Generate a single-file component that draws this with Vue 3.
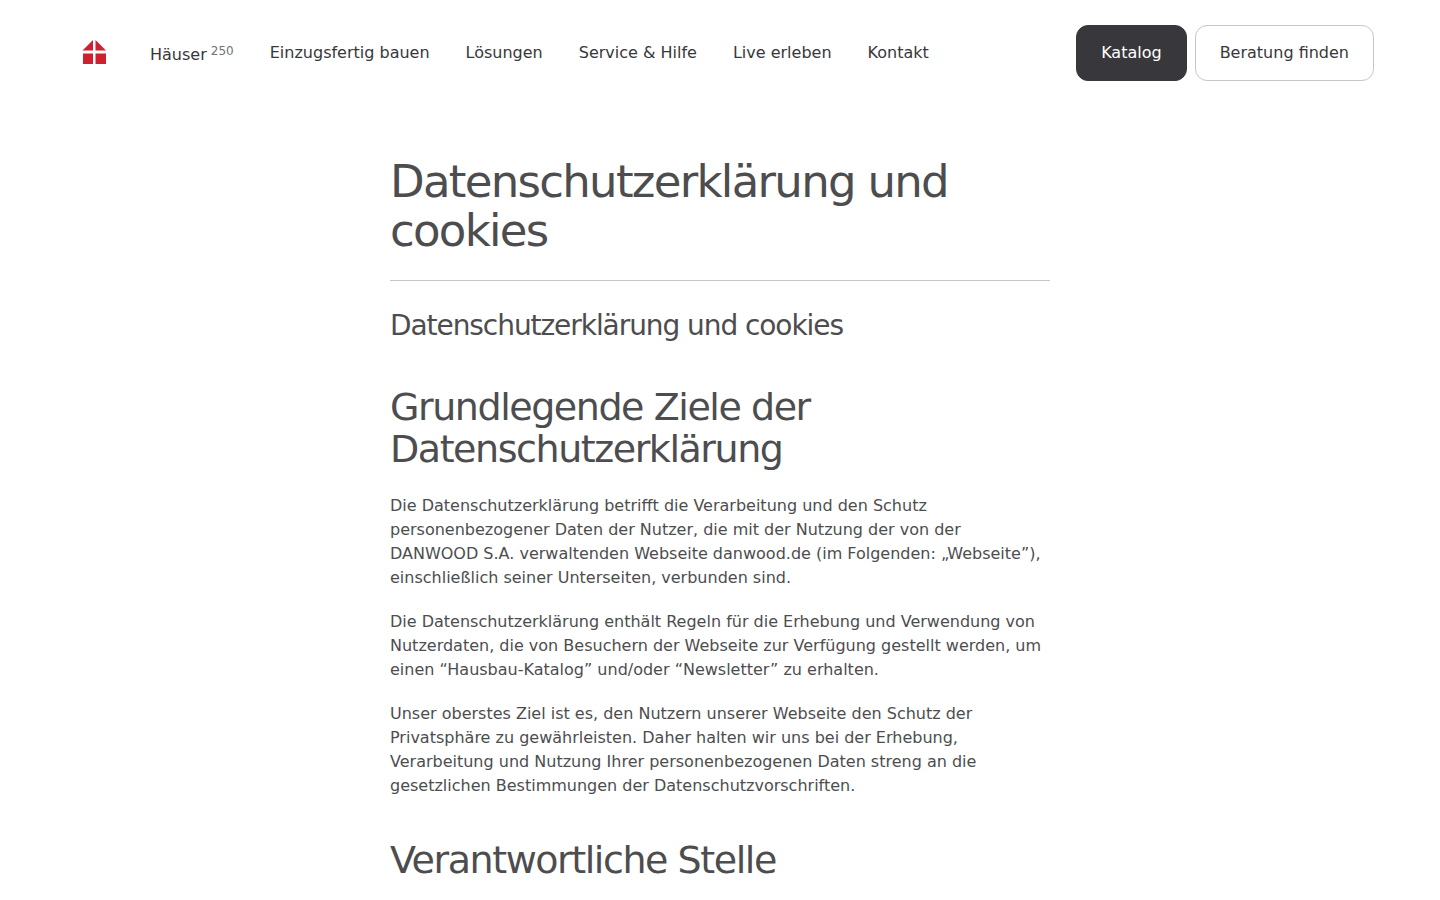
<script setup>
const nav = ['Einzugsfertig bauen', 'Lösungen', 'Service & Hilfe', 'Live erleben', 'Kontakt']
</script>

<template>
  <div class="page">
    <header class="header">
      <a href="#" class="logo" aria-label="Danwood">
        <svg width="24" height="26" viewBox="0 0 24 26" fill="#cf202f">
          <path d="M11 0v10.5H0.5z" />
          <path d="M13.5 0v10.5H24z" />
          <path d="M1 13.5h10V24H1z" />
          <path d="M13.5 13.5H24V24H13.5z" />
        </svg>
      </a>
      <nav class="nav">
        <a href="#">Häuser <sup>250</sup></a>
        <a v-for="item in nav" :key="item" href="#">{{ item }}</a>
      </nav>
      <div class="actions">
        <button type="button" class="btn dark">Katalog</button>
        <button type="button" class="btn">Beratung finden</button>
      </div>
    </header>
    <main class="content">
      <h1>Datenschutzerklärung und cookies</h1>
      <h3>Datenschutzerklärung und cookies</h3>
      <h2>Grundlegende Ziele der Datenschutzerklärung</h2>
      <p>Die Datenschutzerklärung betrifft die Verarbeitung und den Schutz personenbezogener Daten der Nutzer, die mit der Nutzung der von der DANWOOD S.A. verwaltenden Webseite danwood.de (im Folgenden: „Webseite”), einschließlich seiner Unterseiten, verbunden sind.</p>
      <p>Die Datenschutzerklärung enthält Regeln für die Erhebung und Verwendung von Nutzerdaten, die von Besuchern der Webseite zur Verfügung gestellt werden, um einen “Hausbau-Katalog” und/oder “Newsletter” zu erhalten.</p>
      <p>Unser oberstes Ziel ist es, den Nutzern unserer Webseite den Schutz der Privatsphäre zu gewährleisten. Daher halten wir uns bei der Erhebung, Verarbeitung und Nutzung Ihrer personenbezogenen Daten streng an die gesetzlichen Bestimmungen der Datenschutzvorschriften.</p>
      <h2>Verantwortliche Stelle</h2>
    </main>
  </div>
</template>

<style>
body {
  background: #fff;
}
</style>

<style scoped>
.page {
  font-family: "DejaVu Sans", sans-serif;
  font-size: 16px;
  line-height: 24px;
  color: #4d4d4f;
}
.header {
  display: flex;
  align-items: center;
  padding: 25px 66px 0 82px;
  color: #38373b;
}
.logo {
  display: flex;
  margin-right: 44px;
}
.nav {
  display: flex;
  align-items: center;
  gap: 36px;
}
.nav a {
  color: inherit;
  text-decoration: none;
  white-space: nowrap;
}
sup {
  font-size: 12px;
  line-height: 24px;
  vertical-align: 5px;
  color: #737275;
  margin-left: -1px;
}
.actions {
  display: flex;
  gap: 8px;
  margin-left: auto;
}
.btn {
  height: 56px;
  padding: 0 24px;
  border: 1px solid #c6c6c9;
  border-radius: 12px;
  background: #fff;
  color: #38373b;
  font: inherit;
  white-space: nowrap;
}
.btn.dark {
  background: #38373b;
  border-color: #38373b;
  color: #fff;
}
.content {
  max-width: 660px;
  margin: 76px auto 0;
}
h1, h2, h3 {
  font-weight: 400;
  letter-spacing: -0.038em;
}
h1 {
  margin: 0 0 26px;
  padding-bottom: 25px;
  border-bottom: 1px solid #c6c6c9;
  font-size: 45px;
  line-height: 49px;
}
h3 {
  margin: 0;
  font-size: 28px;
  line-height: 38px;
}
h2 {
  margin: 41px 0 24px;
  font-size: 38px;
  line-height: 42px;
}
p {
  margin: 0 0 20px;
}
</style>
